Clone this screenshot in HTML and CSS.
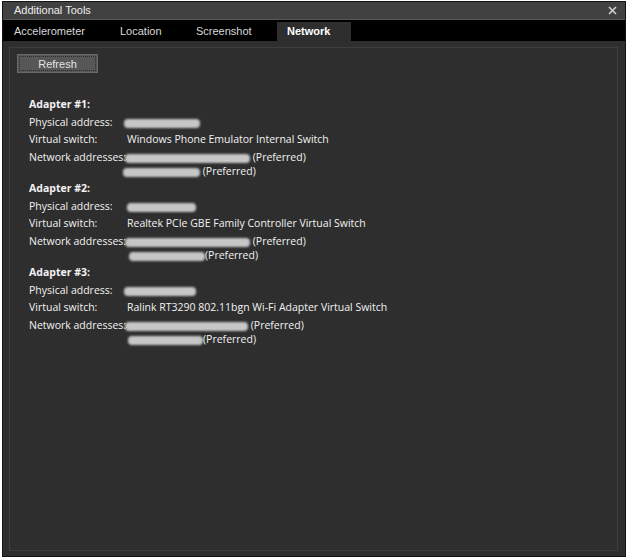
FILE: index.html
```html
<!DOCTYPE html>
<html>
<head>
<meta charset="utf-8">
<link rel="stylesheet" href="styles.css">
</head>
<body>
<div class="window">
  <div class="titlebar">
    <span class="title">Additional Tools</span>
    <svg class="close" width="9" height="9" viewBox="0 0 9 9"><path d="M1 1 L8 8 M8 1 L1 8" stroke="#d0d0d0" stroke-width="1.6" fill="none"/></svg>
  </div>
  <div class="tabs">
    <div class="tab tab-acc">Accelerometer</div>
    <div class="tab tab-loc">Location</div>
    <div class="tab tab-shot">Screenshot</div>
    <div class="tab tab-net active">Network</div>
  </div>
  <div class="content">
    <div class="panel">
      <button class="refresh">Refresh</button>
      <div class="adapters">
        <div class="adapter">
          <div class="row head">Adapter #1:</div>
          <div class="row r-phys"><span class="label">Physical address:</span><span class="blob" style="width:76px;margin-left:-3px"></span></div>
          <div class="row"><span class="label">Virtual switch:</span><span>Windows Phone Emulator Internal Switch</span></div>
          <div class="row r-net"><span class="label">Network addresses:</span><span class="blob" style="width:125px;margin-left:-2px"></span><span class="pref">&nbsp;(Preferred)</span></div>
          <div class="row r-net2"><span class="label"></span><span class="blob" style="width:77px;margin-left:-4px"></span><span class="pref">&nbsp;(Preferred)</span></div>
        </div>
        <div class="adapter">
          <div class="row head">Adapter #2:</div>
          <div class="row r-phys"><span class="label">Physical address:</span><span class="blob" style="width:69px"></span></div>
          <div class="row"><span class="label">Virtual switch:</span><span>Realtek PCIe GBE Family Controller Virtual Switch</span></div>
          <div class="row r-net"><span class="label">Network addresses:</span><span class="blob" style="width:125px;margin-left:-2px"></span><span class="pref">&nbsp;(Preferred)</span></div>
          <div class="row r-net2"><span class="label"></span><span class="blob" style="width:76px;margin-left:2px"></span><span class="pref">(Preferred)</span></div>
        </div>
        <div class="adapter">
          <div class="row head">Adapter #3:</div>
          <div class="row r-phys"><span class="label">Physical address:</span><span class="blob" style="width:72px;margin-left:-3px"></span></div>
          <div class="row"><span class="label">Virtual switch:</span><span>Ralink RT3290 802.11bgn Wi-Fi Adapter Virtual Switch</span></div>
          <div class="row r-net"><span class="label">Network addresses:</span><span class="blob" style="width:123px;margin-left:-2px"></span><span class="pref">&nbsp;(Preferred)</span></div>
          <div class="row r-net2"><span class="label"></span><span class="blob" style="width:75px;margin-left:1px"></span><span class="pref">(Preferred)</span></div>
        </div>
      </div>
    </div>
  </div>
</div>
</body>
</html>
```

FILE: styles.css
```css
html, body {
  margin: 0;
  padding: 0;
  background: #ffffff;
}
.window {
  box-sizing: border-box;
  margin: 1px 0 0 2px;
  width: 624px;
  height: 556px;
  border: 1px solid #141414;
  background: #2e2e2e;
  display: flex;
  flex-direction: column;
}
.titlebar {
  height: 17px;
  background: #414141;
  border-bottom: 1px solid #575757;
  display: flex;
  align-items: center;
  justify-content: space-between;
  padding: 0 8px 0 11px;
}
.title {
  font-family: "Liberation Sans", Arial, sans-serif;
  font-size: 11px;
  line-height: 15px;
  color: #ececec;
}
.close {
  display: block;
}
.tabs {
  height: 21px;
  background: #000000;
  display: flex;
  align-items: flex-end;
}
.tab {
  box-sizing: border-box;
  height: 21px;
  padding-left: 11px;
  font-family: "Liberation Sans", Arial, sans-serif;
  font-size: 11px;
  line-height: 22px;
  color: #d8d8d8;
}
.tab-acc { width: 106px; }
.tab-loc { width: 76px; }
.tab-shot { width: 92px; }
.tab-net { width: 74px; padding-left: 10px; }
.tab.active {
  height: 19px;
  line-height: 19px;
  background: #2e2e2e;
  color: #ffffff;
  font-weight: bold;
}
.content {
  flex: 1;
  padding: 6px 7px 5px 6px;
  display: flex;
}
.panel {
  flex: 1;
  border: 1px solid #3e3e3e;
  padding: 6px 0 0 7px;
}
.refresh {
  display: block;
  box-sizing: border-box;
  width: 81px;
  height: 19px;
  margin: 0;
  padding: 1px 0 0 0;
  background: #575757;
  border: 1px solid #686868;
  outline: 1px dotted #2c2c2c;
  outline-offset: -3px;
  font-family: "Liberation Sans", Arial, sans-serif;
  font-size: 11px;
  line-height: 16px;
  color: #e4e4e4;
}
.adapters {
  margin-top: 23px;
  padding-left: 12px;
  font-family: "Open Sans", sans-serif;
  font-size: 10.5px;
  color: #f2f2f2;
}
.row {
  height: 17px;
  line-height: 17px;
  display: flex;
  align-items: center;
  white-space: nowrap;
}
.head {
  font-weight: bold;
}
.r-phys { margin-top: 1px; }
.r-net { margin-top: 1px; }
.r-net2 { margin-top: -3px; }
.label {
  min-width: 98px;
  flex: none;
}
.blob {
  display: inline-block;
  height: 9px;
  margin-top: 1px;
  background: #c6c6c6;
  border-radius: 4px;
  filter: blur(0.9px);
  flex: none;
}
.pref {
  flex: none;
}
```
